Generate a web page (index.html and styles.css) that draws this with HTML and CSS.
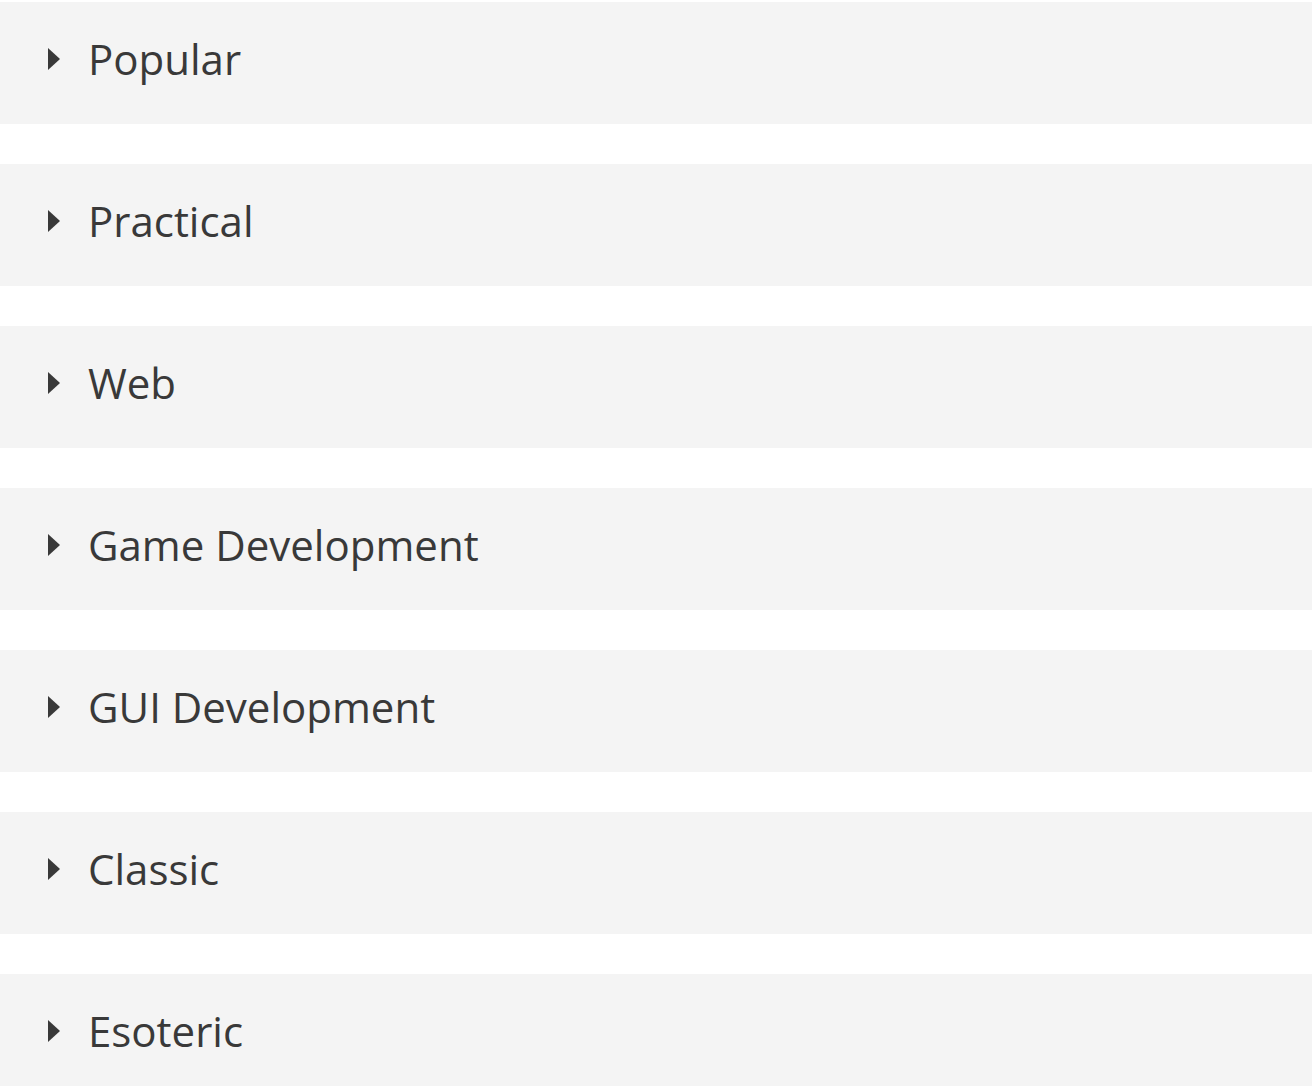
FILE: index.html
```html
<!DOCTYPE html>
<html lang="en">
<head>
    <meta charset="UTF-8">
    <meta name="viewport" content="width=device-width, initial-scale=1.0">
    <title>Categories</title>
    <link rel="stylesheet" href="styles.css">
</head>
<body>
    <div class="accordion">
        <div class="accordion-item">
            <button class="accordion-heading"><span class="chevron"></span><span class="title">Popular</span></button>
        </div>
        <div class="accordion-item">
            <button class="accordion-heading"><span class="chevron"></span><span class="title">Practical</span></button>
        </div>
        <div class="accordion-item">
            <button class="accordion-heading"><span class="chevron"></span><span class="title">Web</span></button>
        </div>
        <div class="accordion-item">
            <button class="accordion-heading"><span class="chevron"></span><span class="title">Game Development</span></button>
        </div>
        <div class="accordion-item">
            <button class="accordion-heading"><span class="chevron"></span><span class="title">GUI Development</span></button>
        </div>
        <div class="accordion-item">
            <button class="accordion-heading"><span class="chevron"></span><span class="title">Classic</span></button>
        </div>
        <div class="accordion-item">
            <button class="accordion-heading"><span class="chevron"></span><span class="title">Esoteric</span></button>
        </div>
    </div>
</body>
</html>
```

FILE: styles.css
```css
body {
    font-family: "Open Sans", Arial, sans-serif;
    margin: 0;
    padding: 2px 0 0;
    background-color: #fff;
}
.accordion {
    display: flex;
    flex-direction: column;
    gap: 40px;
}
.accordion-item {
    background-color: #f4f4f4;
}
.accordion-heading {
    display: flex;
    align-items: center;
    width: 100%;
    height: 122px;
    padding: 0 0 8px 48px;
    border: none;
    background: none;
    font-family: inherit;
    font-size: 42px;
    color: #393939;
    cursor: pointer;
    text-align: left;
}
.chevron {
    width: 0;
    height: 0;
    margin-top: -1px;
    margin-right: 28px;
    border-top: 11px solid transparent;
    border-bottom: 11px solid transparent;
    border-left: 12px solid #393939;
}
.title {
    line-height: 1;
}
```
